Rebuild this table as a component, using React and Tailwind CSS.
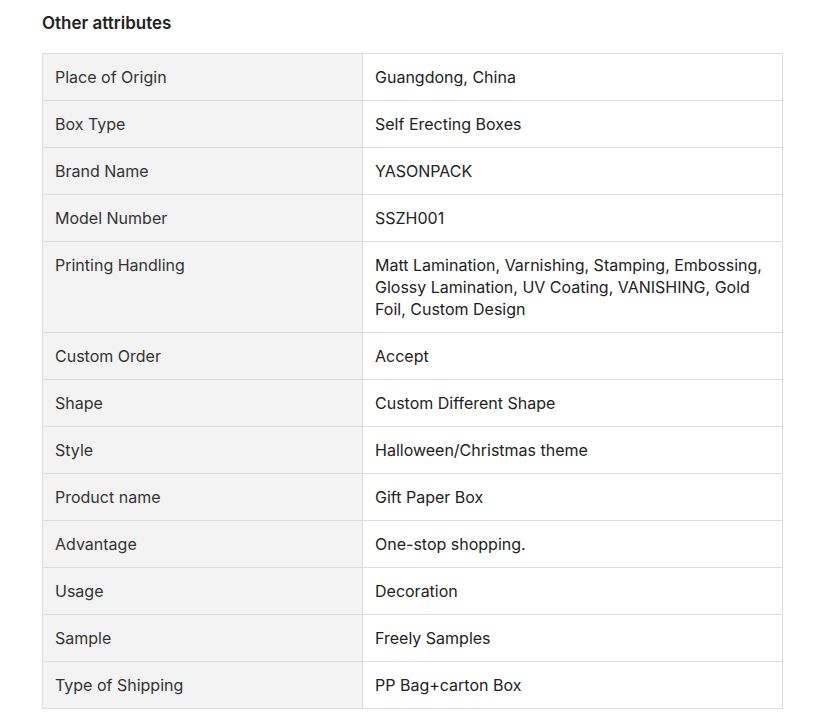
import React from "react";

const rows = [
  ["Place of Origin", "Guangdong, China"],
  ["Box Type", "Self Erecting Boxes"],
  ["Brand Name", "YASONPACK"],
  ["Model Number", "SSZH001"],
  ["Printing Handling", "Matt Lamination, Varnishing, Stamping, Embossing, Glossy Lamination, UV Coating, VANISHING, Gold Foil, Custom Design"],
  ["Custom Order", "Accept"],
  ["Shape", "Custom Different Shape"],
  ["Style", "Halloween/Christmas theme"],
  ["Product name", "Gift Paper Box"],
  ["Advantage", "One-stop shopping."],
  ["Usage", "Decoration"],
  ["Sample", "Freely Samples"],
  ["Type of Shipping", "PP Bag+carton Box"],
];

export default function App() {
  return (
    <div className="min-h-screen bg-white px-[42px] pt-[11px] font-['Inter',sans-serif] text-[#333]">
      <h2 className="text-[17px] leading-6 font-semibold text-[#222] mb-[18px]">Other attributes</h2>
      <table className="w-[741px] table-fixed border-collapse text-[16px] leading-[22px]">
        <colgroup>
          <col className="w-[320px]" />
          <col />
        </colgroup>
        <tbody>
          {rows.map(([k, v]) => (
            <tr key={k}>
              <td className="border border-[#ddd] bg-[#f3f3f3] px-3 py-3 align-top text-[#333]">{k}</td>
              <td className="border border-[#ddd] bg-white px-3 py-3 align-top text-[#222]">{v}</td>
            </tr>
          ))}
        </tbody>
      </table>
    </div>
  );
}
